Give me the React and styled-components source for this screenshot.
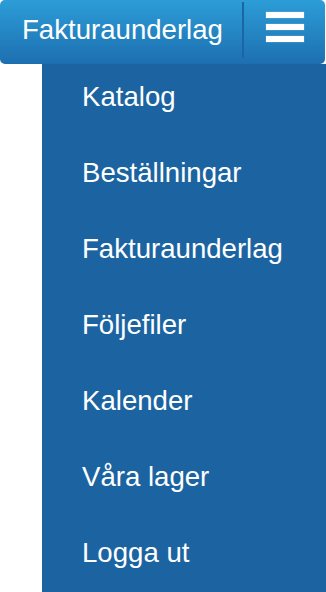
import React from 'react'
import styled, { createGlobalStyle } from 'styled-components'

const items = ['Katalog', 'Beställningar', 'Fakturaunderlag', 'Följefiler', 'Kalender', 'Våra lager', 'Logga ut']

const App = () => {
  return (
    <Page>
      <Global />
      <Header>
        <Title>Fakturaunderlag</Title>
        <MenuButton aria-label="Meny">
          <Bar />
          <Bar />
          <Bar />
        </MenuButton>
      </Header>
      <Menu>
        {items.map((item) => (
          <Item key={item}>{item}</Item>
        ))}
      </Menu>
    </Page>
  )
}

export default App

const Global = createGlobalStyle`
  html, body {
    margin: 0;
    padding: 0;
    background: #fff;
    overflow: hidden;
  }
  body {
    font-family: "Liberation Sans", Arial, Helvetica, sans-serif;
  }
`

const Page = styled.div`
  width: 326px;
  height: 592px;
  display: flex;
  flex-direction: column;
  overflow: hidden;
`

const Header = styled.div`
  height: 64px;
  width: 325px;
  display: flex;
  align-items: stretch;
  border-radius: 5px;
  background: linear-gradient(#2c9dd7, #1d6fb0);
  color: #fff;
  flex-shrink: 0;
`

const Title = styled.div`
  flex: 1;
  display: flex;
  align-items: center;
  padding-left: 22px;
  padding-bottom: 4px;
  font-size: 27.6px;
  white-space: nowrap;
`

const MenuButton = styled.div`
  width: 81px;
  display: flex;
  flex-direction: column;
  justify-content: center;
  align-items: center;
  gap: 6px;
  padding-bottom: 6px;
  position: relative;
  border-left: 2px solid #1b66a6;
  margin: 2px 0 6px;
`

const Bar = styled.span`
  display: block;
  width: 38px;
  height: 6px;
  background: #fff;
  box-shadow: 0 0 1px rgba(255, 255, 255, 0.6);
`

const Menu = styled.div`
  margin-left: 42px;
  flex: 1;
  background: #1c64a1;
  display: flex;
  flex-direction: column;
`

const Item = styled.div`
  height: 76px;
  flex-shrink: 0;
  box-sizing: border-box;
  padding: 0 0 10px 40px;
  line-height: 66px;
  font-size: 27.6px;
  color: #fff;
  white-space: nowrap;
`
